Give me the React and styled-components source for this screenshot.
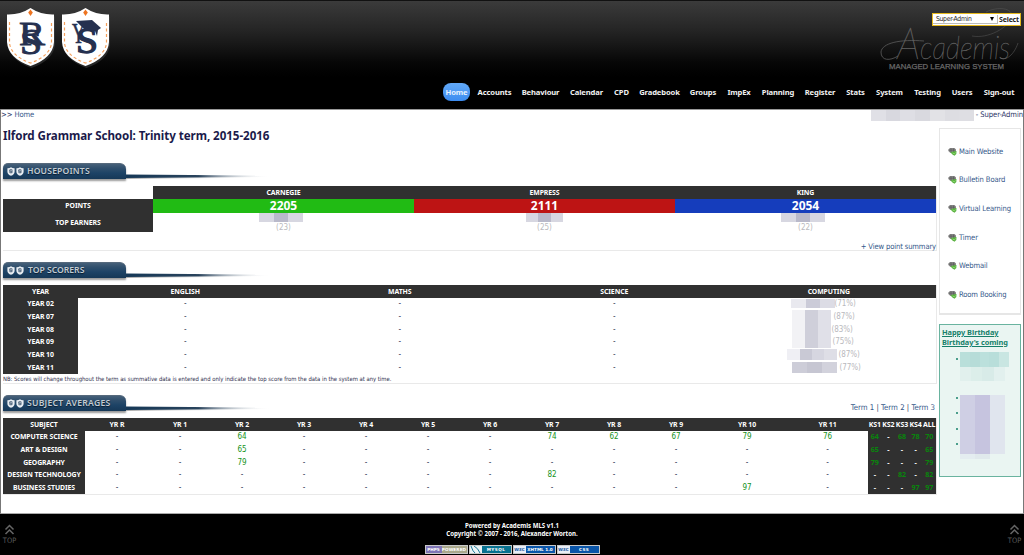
import React from 'react';
import styled, { createGlobalStyle } from 'styled-components';

const Global = createGlobalStyle`
  * { box-sizing: border-box; }
  body { margin: 0; background: #fff; overflow: hidden; color: #2a3566;
    font-family: "DejaVu Sans Condensed", "Noto Sans", sans-serif; font-size: 7.6px; }
  a { color: #35588a; text-decoration: none; }
`;
const Page = styled.div`width: 1024px; height: 555px; display: flex; flex-direction: column;`;
const Header = styled.header`
  height: 109px; flex: none; display: flex; justify-content: space-between;
  border-top: 1px solid #111; background: linear-gradient(#3b3b3b 0, #242424 30px, #060606 62px, #000 76px);
`;
const Crests = styled.div`display: flex; gap: 5px; padding: 6px 0 0 6px;`;
const HeaderRight = styled.div`position: relative; display: flex; flex-direction: column; align-items: flex-end;`;
const RoleBar = styled.div`
  position: absolute; right: 3px; top: 12px; width: 89px; height: 13px; display: flex; align-items: center;
  border: 1px solid #e6b91e; background: #fff; color: #222;
`;
const RoleSelect = styled.div`
  width: 65px; height: 9px; flex: none; padding: 0 3px 0 3px; border: 1px solid #bbb; border-width: 0 1px 1px 0;
  display: flex; align-items: center; justify-content: space-between; font-size: 6.8px; letter-spacing: -0.32px;
`;
const Arrow = styled.span`border: 2px solid transparent; border-top: 4px solid #000; border-bottom: 0;`;
const RoleButton = styled.span`flex: 1; text-align: center; font: bold 7px "Noto Sans", sans-serif; letter-spacing: -0.2px;`;
const Brand = styled.svg`display: block; margin-right: 2px;`;
const Nav = styled.nav`display: flex; padding-right: 6px;`;
const NavItem = styled.a`
  height: 18px; line-height: 18px; padding: 0 3px; border-radius: 8px; margin-left: 5px; white-space: nowrap;
  width: ${p => p.$w + 6}px; display: flex; justify-content: center;
  font-family: "Noto Sans", sans-serif; font-weight: bold; font-size: 7.6px; letter-spacing: -0.12px;
  && { color: ${p => (p.$active ? '#e6f1ff' : '#f2f2f2')}; }
  background: ${p => (p.$active ? 'linear-gradient(#62a9f8, #3c8cf0)' : 'none')};
`;
const Body = styled.div`
  height: 405px; flex: none; border: 1px solid #777; border-top-color: #999; border-bottom-color: #aaa;
  padding: 0 2px; display: flex; flex-direction: column;
`;
const Crumbs = styled.div`
  height: 18px; display: flex; justify-content: space-between; margin: 0 -2px; line-height: 10px;
`;
const Trail = styled.div`letter-spacing: -0.08px;`;
const User = styled.div`display: flex; gap: 2px; letter-spacing: -0.08px;`;
const Mask = styled.span`
  display: block; flex: none; width: ${p => p.$w}px; height: ${p => p.$h}px;
  margin: ${p => p.$m || 0};
  background: linear-gradient(90deg, ${p => (p.$c || ['#e9e9ef', '#cbcbd8', '#dcdce5']).map((c, i, a) =>
    `${c} ${(i * 100) / a.length}% ${((i + 1) * 100) / a.length}%`).join(', ')});
`;
const Columns = styled.div`display: flex; gap: 2px; align-items: flex-start;`;
const Main = styled.main`width: 934px; flex: none;`;
const Title = styled.h1`
  margin: 0; height: 34px; padding-top: 1px; font: bold 11.6px/14px "Noto Sans", sans-serif; color: #1b1b4b;
  letter-spacing: -0.06px; white-space: nowrap;
`;
const Section = styled.section`height: ${p => p.$h}px; display: flex; flex-direction: column;`;
const TabRow = styled.div`display: flex; height: 18px; align-items: flex-end; flex: none; justify-content: space-between;`;
const TabGroup = styled.div`display: flex; align-items: flex-end; height: 18px; padding-bottom: 1px;`;
const Tab = styled.div`
  width: 123px; height: 16px; display: flex; align-items: center; padding-left: 4px; gap: 1px;
  border-radius: 5px 6px 0 0; background: linear-gradient(#466079 0, #31506d 4px, #1d4366 9px, #163857 100%);
  box-shadow: 0 2px 2px #9a9a9a; border-top: 1px solid #56697c;
`;
const TabText = styled.span`
  color: #c3ccd3; font: 600 8.6px/12px "Noto Sans", sans-serif; letter-spacing: ${p => p.$ls}px; text-shadow: 0 1px 1px #0a1c2e;
  margin: -1px 0 0 ${p => p.$ml}px; white-space: nowrap;
`;
const Tail = styled.svg`display: block;`;
const Panel = styled.div`margin-top: 6px; height: ${p => p.$h}px; border: 1px solid #e9e9e9; border-width: 0 1px 1px 0; width: 934px;`;
const Row = styled.div`
  display: grid; grid-template-columns: ${p => p.$cols}; grid-template-rows: 100%; height: ${p => p.$h || 12.67}px; width: 933px;
`;
const Cell = styled.div`
  display: flex; align-items: center; justify-content: center; white-space: nowrap; overflow: visible;
  background: ${p => p.$bg || 'transparent'};
  color: ${p => p.$fg || '#2a3252'}; font-size: 8px; line-height: 11px;
`;
const Head = styled(Cell)`
  background: #303030; color: ${p => p.$fg || '#fff'};
  font-family: "Noto Sans", sans-serif; font-weight: bold; font-size: ${p => p.$size || 6.9}px;
  letter-spacing: -0.08px;
`;
const Score = styled(Cell)`color: #fff; font: bold 12px/14px "Noto Sans", sans-serif;`;
const Earner = styled.div`display: flex; flex-direction: column; align-items: center; color: #b9b9bd; font-size: 8px; line-height: 11px;`;
const Percent = styled.div`
  display: flex; align-items: center; padding-left: ${p => p.$x}px; gap: ${p => p.$g}px; color: #b9b9bd; font-size: 8px;
  letter-spacing: -0.05px;
`;
const LinkLine = styled.div`display: flex; justify-content: flex-end; padding-top: ${p => p.$t}px; line-height: 10px; letter-spacing: -0.14px;`;
const Note = styled.div`font-size: 5.9px; line-height: 10px; color: #30304e; white-space: nowrap; letter-spacing: -0.015px;`;
const Terms = styled.div`align-self: flex-end; padding: 0 2px 0 0; height: 10px; line-height: 10px; font-size: 7.8px; position: relative; top: 1px;`;
const Side = styled.aside`width: 82px; display: flex; flex-direction: column; gap: 9px; flex: none;`;
const Links = styled.div`height: 187px; border: 1px solid #e6e6e6; border-bottom-width: 2px; padding: 8px 0 0 8px;`;
const SideLink = styled.a`display: flex; align-items: center; height: 28.6px; gap: 2px; white-space: nowrap; letter-spacing: -0.14px;`;
const Birthday = styled.div`height: 153px; border: 1px solid #69b39f; background: #eaf5f2; padding: 3px 0 0 2px;`;
const BirthdayHead = styled.div`
  font: bold 7.4px/9.5px "Noto Sans", sans-serif; color: #16806a; text-decoration: underline; white-space: nowrap; letter-spacing: -0.05px;
`;
const Person = styled.div`display: flex; align-items: flex-start; gap: 2px; padding-left: 14px; height: 44px;`;
const Dot = styled.span`width: 2px; height: 2px; border-radius: 1px; background: #16806a; margin-top: ${p => p.$t || 0}px;`;
const Stack = styled.div`display: flex; flex-direction: column;`;
const BirthdayList = styled.div`display: flex; padding: 4px 0 0 14px; gap: 2px;`;
const Dots = styled.div`display: flex; flex-direction: column; gap: 13.3px; padding-top: 2px;`;
const Footer = styled.footer`
  flex: 1; background: #000; color: #fff; display: flex; justify-content: space-between; padding: 0 2px;
`;
const TopLink = styled.div`
  display: flex; flex-direction: column; align-items: center; width: 15px; color: #5c5c5c; font-size: 7.4px; line-height: 9px; padding-top: 10px;
  svg { display: block; margin-bottom: 1px; }
`;
const Credits = styled.div`
  display: flex; flex-direction: column; align-items: center; padding-top: 8px;
  font: bold 6.1px/8px "Noto Sans", sans-serif;
`;
const Badges = styled.div`display: flex; gap: 1px; margin-top: 7px;`;
const Badge = styled.div`
  display: flex; width: 43px; height: 9px; border: 1px solid #c8c8c8; font: bold 4.2px/7px "DejaVu Sans", sans-serif; letter-spacing: 0.2px;
`;
const BadgePart = styled.span`
  width: ${p => p.$w}px; background: ${p => p.$bg}; color: ${p => p.$fg || '#fff'}; display: flex; justify-content: center; white-space: nowrap;
  letter-spacing: ${p => p.$ls || 0}px;
`;

const SHIELD = 'M24.500 1 Q35 8 48 7.500 V35 Q47 51 24.500 59 Q2 51 1 35 V7.500 Q14 8 24.500 1Z';

function Crest({ cap }) {
  return (
    <svg width="50" height="62" viewBox="0 0 50 62">
      <path d={SHIELD} fill="#555" opacity=".4" transform="translate(1 2)" />
      <path d={SHIELD} fill="#fff" />
      <path d="M3.500 15 V36 Q5 49 24.500 56 Q44 49 45.500 36 V15" fill="none" stroke="#f4a05c" strokeWidth="1.200" strokeDasharray="3 2.500" />
      <path d="M24.500 2.500 L26.800 5.500 L24.500 9 L22.200 5.500Z" fill="#ee7420" />
      <g fill="#25304f" stroke="#25304f" fontFamily="Liberation Serif, serif">
        {cap ? (
          <>
            <text x="11" y="36" fontSize="29" textLength="13" lengthAdjust="spacingAndGlyphs" strokeWidth=".7">Y</text>
            <text x="15" y="46" fontSize="35" textLength="22" lengthAdjust="spacingAndGlyphs" strokeWidth="1.300">S</text>
            <path d="M15 14 L31 13 L40 21 L37 23 L36 29 L34 24 L24 23Z" stroke="none" />
          </>
        ) : (
          <>
            <text x="13" y="38" fontSize="34" textLength="26" lengthAdjust="spacingAndGlyphs" strokeWidth=".8">R</text>
            <text x="14" y="46.500" fontSize="36" textLength="22" lengthAdjust="spacingAndGlyphs" strokeWidth="1">S</text>
          </>
        )}
      </g>
    </svg>
  );
}

const MiniShield = () => (
  <svg width="8" height="9" viewBox="0 0 8 9">
    <path d="M4 .300 Q5.500 1.300 7.600 1.200 V5 Q7.300 7.700 4 8.800 Q.700 7.700 .400 5 V1.200 Q2.500 1.300 4 .300Z" fill="#e8edf2" />
    <rect x="2.300" y="2.300" width="3.200" height="4" rx="1" fill="#4b6178" />
    <path d="M3.200 3.500 H5.500 M2.500 5 H4.600" stroke="#dfe6ec" strokeWidth=".5" />
  </svg>
);

const LinkIcon = () => (
  <svg width="9" height="9" viewBox="0 0 9 9">
    <path d="M.300 2.500 L2 1 H6.500 L8 2.500 V4.500 L6 6 H2.500 L.300 4Z" fill="#858585" />
    <path d="M1 3.200 H7 M3 1.500 V5 M5.500 1.500 V5" stroke="#555" strokeWidth=".6" />
    <path d="M2.500 5.500 L5 4.500 L8.500 4 L8.300 7 L6.500 8.700 L4.500 7.500Z" fill="#58b03f" />
    <path d="M4.500 6 L6.500 6.800 L7.500 5.500" stroke="#94dd77" strokeWidth=".9" fill="none" />
  </svg>
);

function Heading({ text, ls, ml = 3 }) {
  return (
    <TabGroup>
      <Tab><MiniShield /><MiniShield /><TabText $ls={ls} $ml={ml}>{text}</TabText></Tab>
      <Tail width="150" height="7" viewBox="0 0 150 7">
        <defs>
          <linearGradient id="tail"><stop offset="0" stopColor="#163857" /><stop offset=".5" stopColor="#29435c" /><stop offset="1" stopColor="#fff" stopOpacity="0" /></linearGradient>
          <linearGradient id="shade"><stop offset="0" stopColor="#aaa" /><stop offset="1" stopColor="#fff" stopOpacity="0" /></linearGradient>
        </defs>
        <path d="M0 5 L145 4.500 V5.500 L0 7Z" fill="url(#shade)" />
        <path d="M0 2.500 L145 3.500 V5 L0 6Z" fill="url(#tail)" />
      </Tail>
    </TabGroup>
  );
}

const nav = [['Home', 21], ['Accounts', 33], ['Behaviour', 37], ['Calendar', 33], ['CPD', 15], ['Gradebook', 39], ['Groups', 26], ['ImpEx', 24], ['Planning', 32], ['Register', 30], ['Stats', 19], ['System', 27], ['Testing', 27], ['Users', 20], ['Sign-out', 32]];
const houses = [['CARNEGIE', 2205, '#21bb14', '(23)'], ['EMPRESS', 2111, '#bd1414', '(25)'], ['KING', 2054, '#153dbc', '(22)']];
const fadeMask = ['#f2f2f5', '#cfcfda', '#e0e0e8'];
const scorers = [
  ['YEAR 02', '(71%)', 69, 44, 0, 9], ['YEAR 07', '(87%)', 70, 39, 3, 12.67, fadeMask], ['YEAR 08', '(83%)', 70, 39, 1, 12.67, fadeMask],
  ['YEAR 09', '(75%)', 70, 39, 2, 12.67, fadeMask], ['YEAR 10', '(87%)', 65, 50, 2, 11, ['#efeff4', '#c9c9d5', '#d6d6e0', '#dedee6']], ['YEAR 11', '(77%)', 70, 45, 3, 11, ['#cdcdd8', '#c6c6d2', '#d2d2dc']],
];
const years = ['YR R', 'YR 1', 'YR 2', 'YR 3', 'YR 4', 'YR 5', 'YR 6', 'YR 7', 'YR 8', 'YR 9', 'YR 10', 'YR 11'];
const averages = [
  ['COMPUTER SCIENCE', { 2: 64, 7: 74, 8: 62, 9: 67, 10: 79, 11: 76 }, [64, '-', 68, 78, 70]],
  ['ART & DESIGN', { 2: 65 }, [65, '-', '-', '-', 65]],
  ['GEOGRAPHY', { 2: 79 }, [79, '-', '-', '-', 79]],
  ['DESIGN TECHNOLOGY', { 7: 82 }, ['-', '-', 82, '-', 82]],
  ['BUSINESS STUDIES', { 10: 97 }, ['-', '-', '-', 97, 97]],
];
const houseCols = '150px repeat(3, 1fr)';
const scoreCols = '75px repeat(4, 1fr)';
const avgCols = '82px 64px repeat(9, 62px) 80px 81px repeat(5, 13.6px)';

const Top = () => (
  <TopLink>
    <svg width="11" height="11" viewBox="0 0 11 11" fill="none" stroke="#666" strokeWidth="1.500"><path d="M1.500 5.500 L5.500 1.500 L9.500 5.500 M1.500 10 L5.500 6 L9.500 10" /></svg>
    TOP
  </TopLink>
);

export default function App() {
  return (
    <Page>
      <Global />
      <Header>
        <Crests><Crest /><Crest cap /></Crests>
        <HeaderRight>
          <Brand width="150" height="82" viewBox="0 0 150 82">
            <g fill="none" stroke="#555" strokeWidth=".9">
              <path d="M26 55 C18 60 9 60 9 51 C10 42 28 38 52 40" />
              <path d="M100 35 C116 38 136 27 140 16 C141 7 126 5 114 11" opacity=".6" />
              <path d="M128 57 C134 60 142 54 146 42" opacity=".7" />
            </g>
            <text x="25" y="58" fontFamily="Lato, sans-serif" fontWeight="100" fontStyle="italic" fontSize="31" fill="#646464" stroke="#646464" strokeWidth=".3" textLength="113" lengthAdjust="spacingAndGlyphs"><tspan fontSize="44">A</tspan>cademis</text>
            <text x="17" y="68" fontFamily="Liberation Sans, sans-serif" fontSize="8" fill="#6a6a6a" stroke="#6a6a6a" strokeWidth=".25" textLength="115" lengthAdjust="spacingAndGlyphs">MANAGED LEARNING SYSTEM</text>
          </Brand>
          <Nav>{nav.map(([n, w], i) => <NavItem key={n} $w={w} $active={i === 0}>{n}</NavItem>)}</Nav>
          <RoleBar><RoleSelect>Super-Admin<Arrow /></RoleSelect><RoleButton>Select</RoleButton></RoleBar>
        </HeaderRight>
      </Header>
      <Body>
        <Crumbs>
          <Trail>&gt;&gt; <a>Home</a></Trail>
          <User><Mask $w={103} $h={11} $c={['#e0e0e6', '#d8d8df', '#dedee4', '#d9d9df', '#e2e2e6', '#dddde2', '#dedee3']} /><span>- Super-Admin</span></User>
        </Crumbs>
        <Columns>
          <Main>
            <Title>Ilford Grammar School: Trinity term, 2015-2016</Title>
            <Section $h={99}>
              <TabRow><Heading text="HOUSEPOINTS" ls={0.18} ml={2} /></TabRow>
              <Panel $h={65}>
                <Row $cols={houseCols}><Cell />{houses.map(h => <Head key={h[0]}>{h[0]}</Head>)}</Row>
                <Row $cols={houseCols} $h={14}><Head>POINTS</Head>{houses.map(h => <Score key={h[0]} $bg={h[2]}>{h[1]}</Score>)}</Row>
                <Row $cols={houseCols} $h={19}><Head>TOP EARNERS</Head>
                  {houses.map((h, i) => <Earner key={h[0]}><Mask $w={i === 1 ? 37 : 44} $h={9} $m={i === 1 ? '0' : '0 6px 0 0'} $c={['#d7d7e1', '#b9b9ca', '#d7d7e1']} />{h[3]}</Earner>)}
                </Row>
                <LinkLine $t={10}><a>+ View point summary</a></LinkLine>
              </Panel>
            </Section>
            <Section $h={133}>
              <TabRow><Heading text="TOP SCORERS" ls={0} /></TabRow>
              <Panel $h={99}>
                <Row $cols={scoreCols}>{['YEAR', 'ENGLISH', 'MATHS', 'SCIENCE', 'COMPUTING'].map(t => <Head key={t}>{t}</Head>)}</Row>
                {scorers.map(([y, p, x, w, g, h, c]) => (
                  <Row key={y} $cols={scoreCols}><Head>{y}</Head><Cell>-</Cell><Cell>-</Cell><Cell>-</Cell>
                    <Percent $x={x} $g={g}><Mask $w={w} $h={h} $c={c} />{p}</Percent>
                  </Row>
                ))}
                <Note>NB: Scores will change throughout the term as summative data is entered and only indicate the top score from the data in the system at any time.</Note>
              </Panel>
            </Section>
            <Section $h={101}>
              <TabRow><Heading text="SUBJECT AVERAGES" ls={0.25} ml={2} /><Terms><a>Term 1</a> | <a>Term 2</a> | <a>Term 3</a></Terms></TabRow>
              <Panel $h={77}>
                <Row $cols={avgCols}><Head>SUBJECT</Head>{years.map(t => <Head key={t}>{t}</Head>)}{['KS1', 'KS2', 'KS3', 'KS4', 'ALL'].map(t => <Head key={t} $size={7}>{t}</Head>)}</Row>
                {averages.map(([s, v, ks]) => (
                  <Row key={s} $cols={avgCols}><Head>{s}</Head>
                    {years.map((y, i) => <Cell key={y} $fg={v[i] && '#16931b'}>{v[i] || '-'}</Cell>)}
                    {ks.map((k, i) => <Head key={i} $size={7.2} $fg={k === '-' ? '#fff' : '#08860c'}>{k}</Head>)}
                  </Row>
                ))}
              </Panel>
            </Section>
          </Main>
          <Side>
            <Links>{['Main Website', 'Bulletin Board', 'Virtual Learning', 'Timer', 'Webmail', 'Room Booking'].map(t => <SideLink key={t}><LinkIcon />{t}</SideLink>)}</Links>
            <Birthday>
              <BirthdayHead>Happy Birthday</BirthdayHead>
              <BirthdayHead>Birthday's coming</BirthdayHead>
              <Person><Dot $t={11} /><Stack><Mask $w={49} $h={15} $m="5px 0 0" $c={['#b9dfda', '#b6dcd8', '#bbe0dc', '#b8deda', '#c9e6e2']} /><Mask $w={45} $h={14} $c={['#e1f0ed', '#dceeea', '#d8ebe8', '#e2f0ee']} /></Stack></Person>
              <BirthdayList><Dots><Dot /><Dot /><Dot /><Dot /></Dots>
                <Stack><Mask $w={45} $h={59} $c={['#cfcfe4', '#c6c4df', '#e0e5ee']} /><Mask $w={30} $h={5} $c={['#e4edf0', '#e0e9ec']} /></Stack>
              </BirthdayList>
            </Birthday>
          </Side>
        </Columns>
      </Body>
      <Footer>
        <Top />
        <Credits>
          <span>Powered by Academis MLS v1.1</span>
          <span>Copyright © 2007 - 2016, Alexander Worton.</span>
          <Badges>
            <Badge><BadgePart $w={16} $bg="#7f75b5">PHP5</BadgePart><BadgePart $w={25} $bg="#a9a88c" $ls={0.1}>POWERED</BadgePart></Badge>
            <Badge>
              <svg width="12" height="7" viewBox="0 0 12 7"><rect width="12" height="7" fill="#e9f2f5" /><path d="M1 0 Q3 6 5 7 M4 0 Q8 2 10 7" stroke="#1b7898" fill="none" /></svg>
              <BadgePart $w={29} $bg="#08718f" $ls={0.4}>MYSQL</BadgePart>
            </Badge>
            <Badge><BadgePart $w={12} $bg="#e9eef6" $fg="#1857a3">W3C</BadgePart><BadgePart $w={29} $bg="#0a55a8">XHTML 1.0</BadgePart></Badge>
            <Badge><BadgePart $w={12} $bg="#e9eef6" $fg="#1857a3">W3C</BadgePart><BadgePart $w={29} $bg="#0a55a8" $ls={0.4}>CSS</BadgePart></Badge>
          </Badges>
        </Credits>
        <Top />
      </Footer>
    </Page>
  );
}
